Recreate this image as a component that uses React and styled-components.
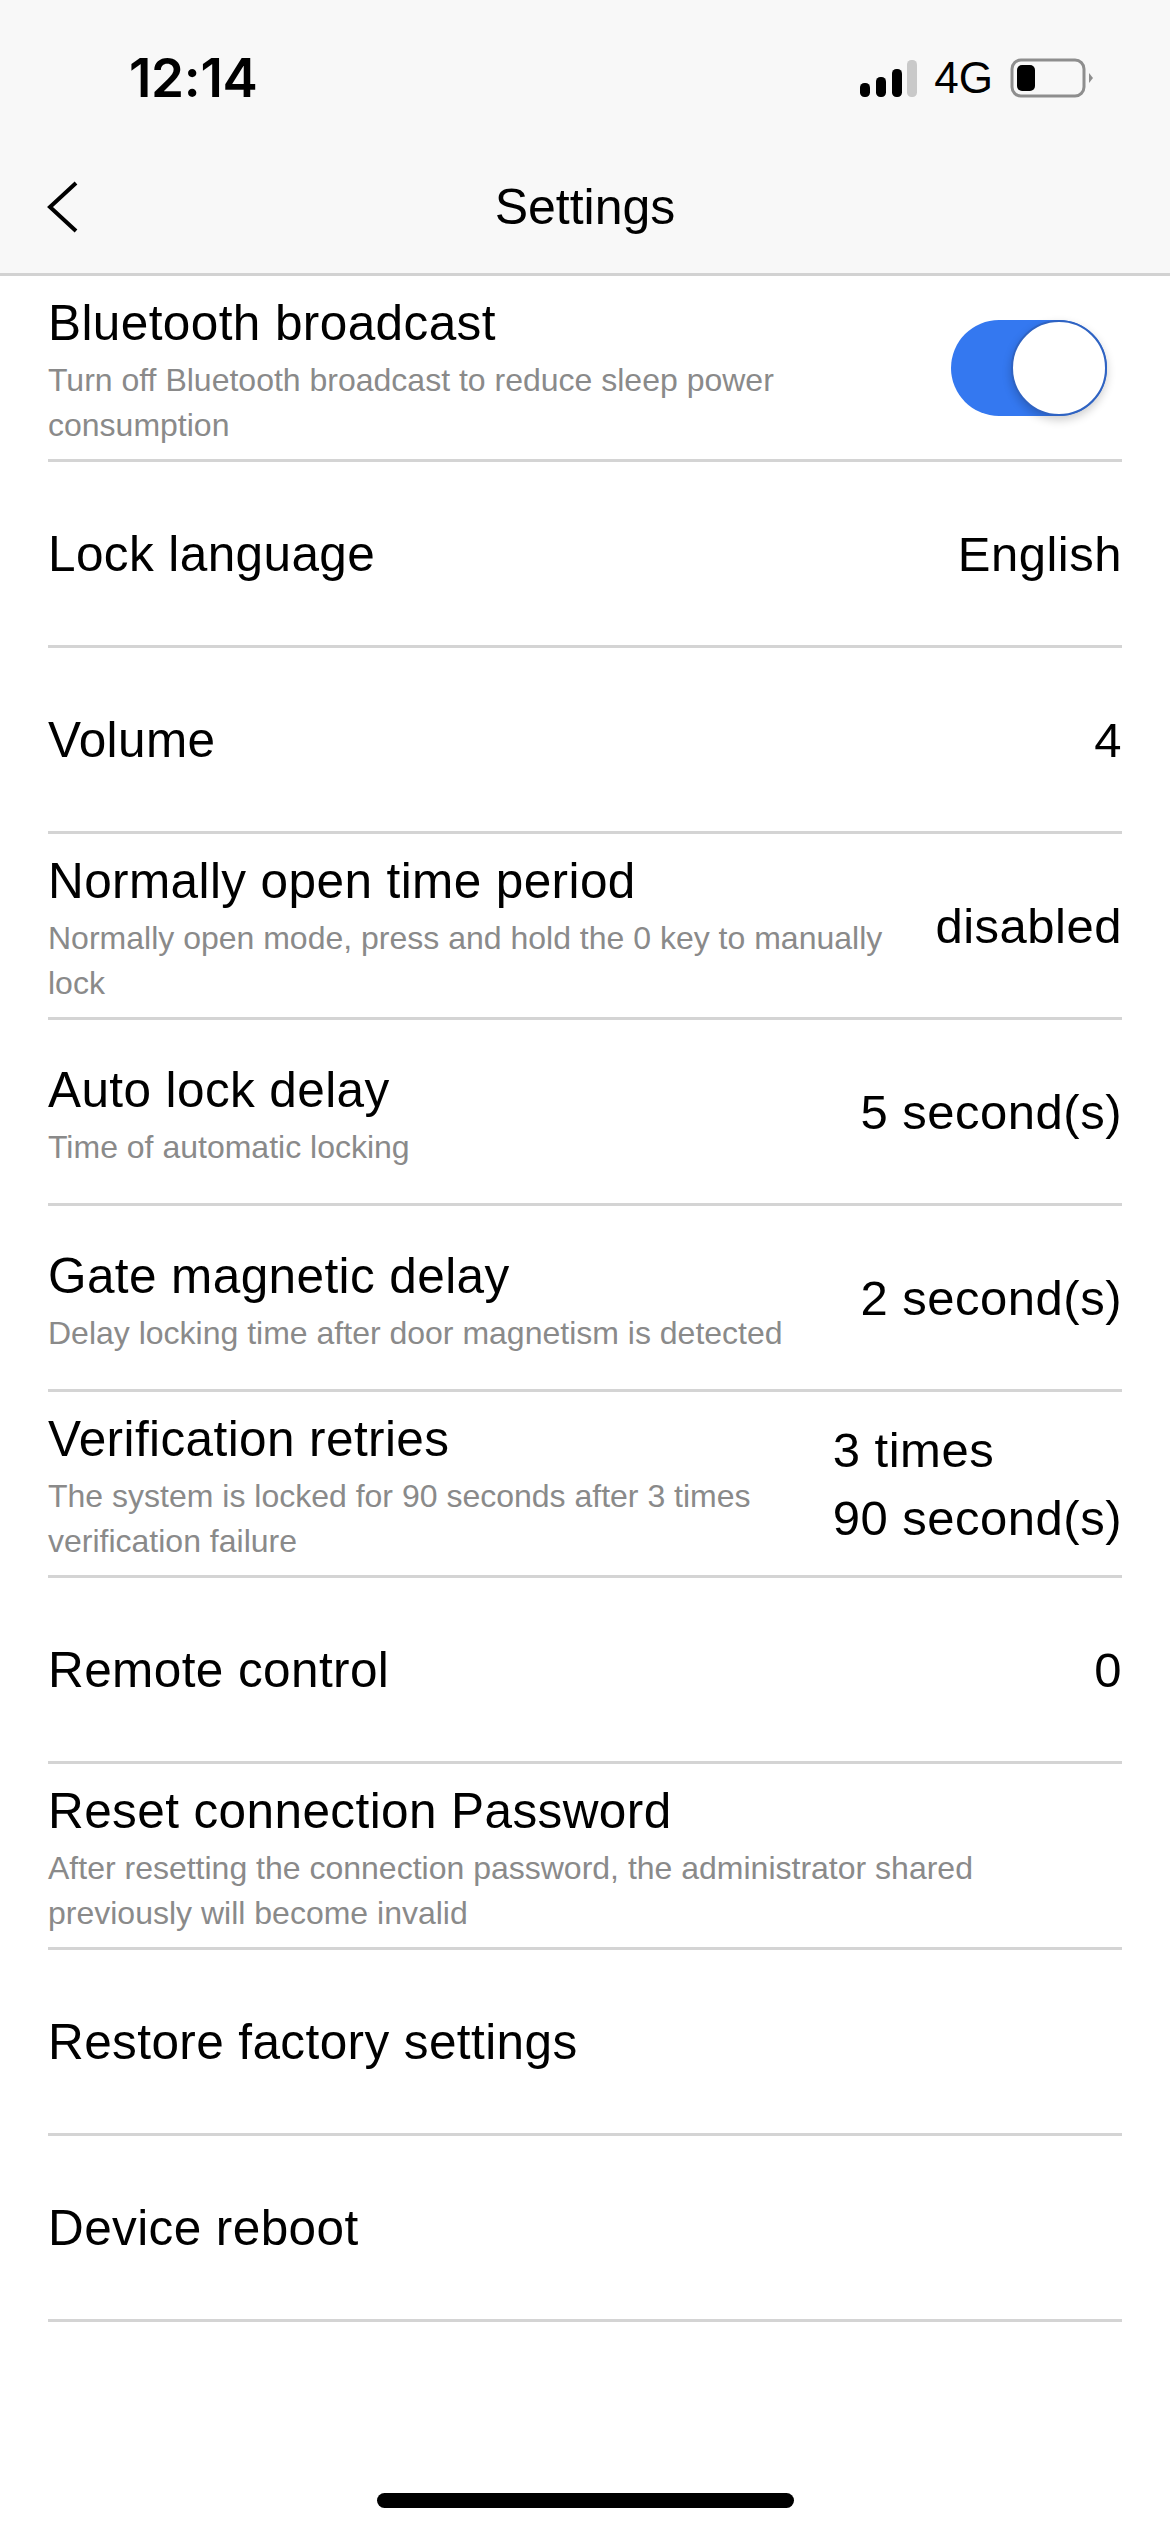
import React from 'react';
import styled, { createGlobalStyle } from 'styled-components';

const GlobalStyle = createGlobalStyle`
    html, body {
        margin : 0;
        padding : 0;
        background-color : #ffffff;
        font-family : 'Liberation Sans', sans-serif;
    }
`

const rows = [
    { title : "Lock language", value : ["English"] },
    { title : "Volume", value : ["4"] },
    { title : "Normally open time period", desc : "Normally open mode, press and hold the 0 key to manually lock", value : ["disabled"] },
    { title : "Auto lock delay", desc : "Time of automatic locking", value : ["5 second(s)"] },
    { title : "Gate magnetic delay", desc : "Delay locking time after door magnetism is detected", value : ["2 second(s)"] },
    { title : "Verification retries", desc : "The system is locked for 90 seconds after 3 times verification failure", value : ["3 times", "90 second(s)"] },
    { title : "Remote control", value : ["0"] },
    { title : "Reset connection Password", desc : "After resetting the connection password, the administrator shared previously will become invalid" },
    { title : "Restore factory settings" },
    { title : "Device reboot" },
];

const signalIcon = <svg width="58" height="38" viewBox="0 0 58 38">
    <rect x="1" y="23" width="10" height="14" rx="4.5" fill="#000" />
    <rect x="17" y="17" width="10" height="20" rx="4.5" fill="#000" />
    <rect x="33" y="9" width="10" height="28" rx="4.5" fill="#000" />
    <rect x="48" y="0" width="10" height="37" rx="4.5" fill="#c9c9c9" />
</svg>

const batteryIcon = <svg width="84" height="40" viewBox="0 0 84 40">
    <rect x="2" y="2" width="72" height="36" rx="9" fill="none" stroke="#8e8e8e" strokeWidth="3" />
    <rect x="7" y="7" width="18" height="26" rx="5" fill="#000" />
    <path d="M79 15 L83 20 L79 25 Z" fill="#8e8e8e" />
</svg>

const backIcon = <svg width="32" height="52" viewBox="0 0 32 52" fill="none">
    <path d="M29 2 L3 26 L29 50" stroke="#000" strokeWidth="4" />
</svg>

const App = () => {
    return (
    <PageWrapper>
        <GlobalStyle />
        <TopArea>
            <StatusBar>
                <Clock>12:14</Clock>
                <StatusIcons>
                    {signalIcon}
                    <Network>4G</Network>
                    {batteryIcon}
                </StatusIcons>
            </StatusBar>
            <NavBar>
                <BackButton>{backIcon}</BackButton>
                <NavTitle>Settings</NavTitle>
            </NavBar>
        </TopArea>
        <List>
            <Row>
                <RowText $hasDesc>
                    <RowTitle>Bluetooth broadcast</RowTitle>
                    <RowDesc>Turn off Bluetooth broadcast to reduce sleep power consumption</RowDesc>
                </RowText>
                <Toggle><Knob /></Toggle>
            </Row>
            {rows.map((r) => {
                return (
                <Row key={r.title}>
                    <RowText $hasDesc={!!r.desc}>
                        <RowTitle>{r.title}</RowTitle>
                        {r.desc && <RowDesc>{r.desc}</RowDesc>}
                    </RowText>
                    {r.value && (
                    <RowValue>
                        {r.value.map((v) => <ValueLine key={v}>{v}</ValueLine>)}
                    </RowValue>
                    )}
                </Row>
                );
            })}
        </List>
        <HomeBar />
    </PageWrapper>
    )
}

const PageWrapper = styled.div`
    position : relative;
    width : 1170px;
    height : 2532px;
    overflow : hidden;
    background-color : #ffffff;
`

const TopArea = styled.header`
    height : 273px;
    background-color : #f8f8f8;
    border-bottom : 3px solid #d2d2d2;
`

const StatusBar = styled.div`
    height : 150px;
    padding : 53px 0 0 129px;
    box-sizing : border-box;
    display : flex;
    justify-content : space-between;
    align-items : flex-start;
`

const Clock = styled.div`
    font-family : 'Inter', sans-serif;
    font-size : 53px;
    line-height : 50px;
    font-weight : 600;
    letter-spacing : -0.3px;
    color : #000000;
`

const StatusIcons = styled.div`
    display : flex;
    align-items : flex-end;
    gap : 17px;
    margin : 5px 76px 0 0;
    height : 40px;
`

const Network = styled.span`
    font-size : 44px;
    line-height : 40px;
    color : #000000;
`

const NavBar = styled.nav`
    position : relative;
    height : 123px;
    display : flex;
    align-items : center;
    justify-content : center;
`

const BackButton = styled.div`
    position : absolute;
    left : 47px;
    top : 31px;
    display : flex;
`

const NavTitle = styled.div`
    font-size : 50px;
    line-height : 60px;
    color : #000000;
    margin : -9px 0 0 0;
`

const List = styled.main`
    padding : 0 48px;
`

const Row = styled.div`
    height : 186px;
    box-sizing : border-box;
    border-bottom : 3px solid #d4d4d4;
    display : flex;
    align-items : center;
    justify-content : space-between;
    gap : 40px;
`

const RowText = styled.div`
    flex : 1;
    min-width : 0;
    padding : ${(props) => props.$hasDesc ? "8px" : "0"} 0 0 0;
`

const RowTitle = styled.div`
    font-size : 49.5px;
    line-height : 56px;
    letter-spacing : 0.4px;
    color : #000000;
`

const RowDesc = styled.div`
    font-size : 32px;
    line-height : 45px;
    margin : 7px 0 0 0;
    color : #8a8a8a;
`

const RowValue = styled.div`
    flex : none;
    text-align : left;
    font-size : 49px;
    line-height : 68px;
    letter-spacing : 0.5px;
    color : #000000;
`

const ValueLine = styled.div`
    white-space : nowrap;
`

const Toggle = styled.div`
    position : relative;
    flex : none;
    width : 156px;
    height : 96px;
    margin : 0 15px 0 0;
    border-radius : 48px;
    background-color : #3478f0;
`

const Knob = styled.div`
    position : absolute;
    right : 0;
    top : 0;
    width : 92px;
    height : 92px;
    border : 2px solid #2f63c2;
    border-radius : 50%;
    background-color : #ffffff;
    box-shadow : 0 4px 10px rgba(0, 0, 0, 0.2);
`

const HomeBar = styled.div`
    position : absolute;
    left : 377px;
    bottom : 24px;
    width : 417px;
    height : 15px;
    border-radius : 8px;
    background-color : #000000;
`

export default App;
